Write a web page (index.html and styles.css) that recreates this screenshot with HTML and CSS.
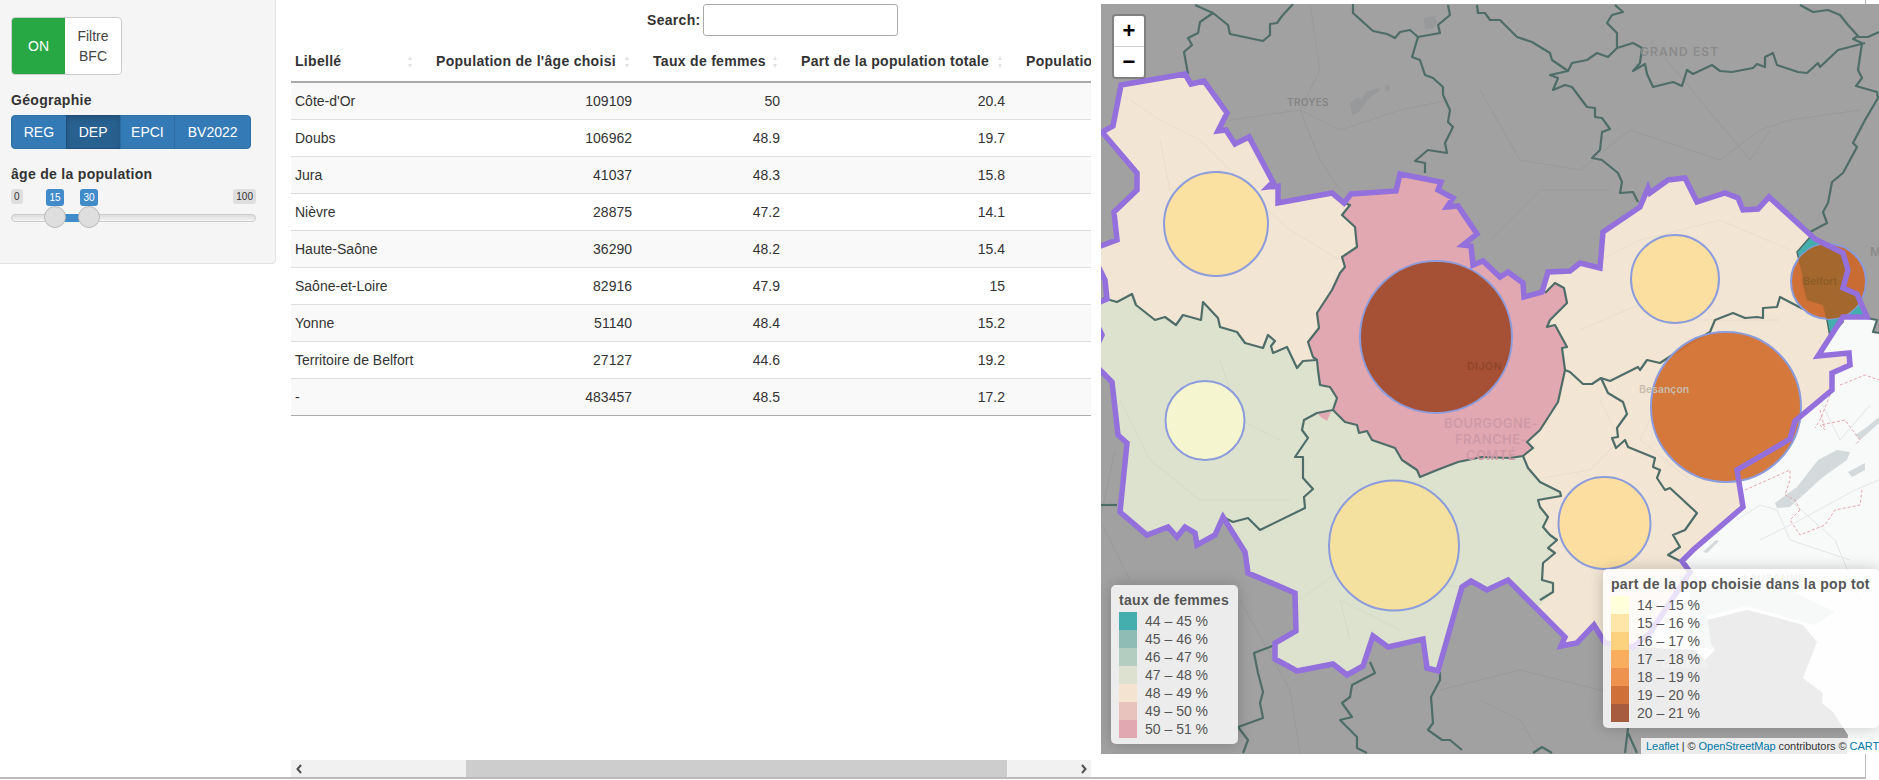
FILE: index.html
```html
<!DOCTYPE html>
<html lang="fr">
<head>
<meta charset="utf-8">
<title>Population par âge</title>
<link rel="stylesheet" href="styles.css">
</head>
<body>
<div class="page">
  <aside class="well">
    <div class="toggle"><span class="toggle-on">ON</span><span class="toggle-label">Filtre BFC</span></div>
    <div class="field-title geo-title">Géographie</div>
    <div class="btn-group">
      <span class="btn btn-reg">REG</span><span class="btn btn-dep">DEP</span><span class="btn btn-epci">EPCI</span><span class="btn btn-bv">BV2022</span>
    </div>
    <div class="field-title age-title">âge de la population</div>
    <div class="slider">
      <span class="tick tick-min">0</span>
      <span class="tick tick-max">100</span>
      <span class="tick tick-from">15</span>
      <span class="tick tick-to">30</span>
      <span class="slider-line"></span>
      <span class="slider-bar"></span>
      <span class="handle handle-from"></span>
      <span class="handle handle-to"></span>
    </div>
  </aside>

  <section class="data">
    <div class="search"><label class="search-label" for="q">Search:</label><input id="q" class="search-input" type="text"></div>
    <div class="table-clip">
      <table class="table">
        <colgroup><col class="c1"><col class="c2"><col class="c3"><col class="c4"><col class="c5"></colgroup>
        <thead>
          <tr>
            <th>Libellé<span class="sort"></span></th>
            <th>Population de l'âge choisi<span class="sort"></span></th>
            <th>Taux de femmes<span class="sort"></span></th>
            <th>Part de la population totale<span class="sort"></span></th>
            <th>Population totale<span class="sort"></span></th>
          </tr>
        </thead>
        <tbody>
          <tr><td>Côte-d'Or</td><td class="num">109109</td><td class="num">50</td><td class="num">20.4</td><td></td></tr>
          <tr><td>Doubs</td><td class="num">106962</td><td class="num">48.9</td><td class="num">19.7</td><td></td></tr>
          <tr><td>Jura</td><td class="num">41037</td><td class="num">48.3</td><td class="num">15.8</td><td></td></tr>
          <tr><td>Nièvre</td><td class="num">28875</td><td class="num">47.2</td><td class="num">14.1</td><td></td></tr>
          <tr><td>Haute-Saône</td><td class="num">36290</td><td class="num">48.2</td><td class="num">15.4</td><td></td></tr>
          <tr><td>Saône-et-Loire</td><td class="num">82916</td><td class="num">47.9</td><td class="num">15</td><td></td></tr>
          <tr><td>Yonne</td><td class="num">51140</td><td class="num">48.4</td><td class="num">15.2</td><td></td></tr>
          <tr><td>Territoire de Belfort</td><td class="num">27127</td><td class="num">44.6</td><td class="num">19.2</td><td></td></tr>
          <tr><td>-</td><td class="num">483457</td><td class="num">48.5</td><td class="num">17.2</td><td></td></tr>
        </tbody>
      </table>
    </div>
    <div class="scrollbar">
      <span class="scroll-btn"><svg class="chev" viewBox="0 0 8 10"><path d="M6 1 L2.5 5 L6 9" /></svg></span>
      <span class="scroll-gap-a"></span>
      <span class="scroll-thumb"></span>
      <span class="scroll-gap-b"></span>
      <span class="scroll-btn"><svg class="chev" viewBox="0 0 8 10"><path d="M2 1 L5.5 5 L2 9" /></svg></span>
    </div>
  </section>

  <section class="map">
    <svg class="map-svg" viewBox="1101 4 778 750" xmlns="http://www.w3.org/2000/svg">
      <defs>
        <polygon id="bfc-shape" points="1102,132 1113,126 1121,85 1185,74 1191,84 1204,81 1227,113 1218,131 1226,130 1235,144 1249,137 1273,182 1268,187 1278,186 1278,203 1332,193 1344,203 1351,194 1396,191 1400,174 1441,182 1438,190 1453,198 1447,207 1458,206 1477,234 1463,245 1471,246 1473,265 1483,261 1500,277 1508,272 1523,283 1524,297 1542,292 1548,272 1570,271 1580,263 1600,268 1603,232 1640,207 1648,188 1650,193 1668,180 1685,178 1697,202 1725,193 1738,198 1743,210 1758,209 1769,197 1815,239 1843,253 1848,270 1843,288 1857,294 1867,317 1843,317 1818,356 1849,353 1850,365 1832,373 1832,390 1795,421 1790,439 1737,470 1743,507 1693,550 1682,561 1690,572 1650,633 1633,647 1605,643 1594,625 1577,643 1561,646 1565,637 1508,580 1487,590 1471,581 1462,587 1438,671 1427,668 1423,639 1388,647 1373,636 1363,666 1347,675 1333,664 1297,671 1275,659 1275,643 1296,631 1295,593 1248,573 1245,552 1223,517 1215,535 1197,545 1195,533 1185,527 1177,537 1168,527 1147,535 1120,512 1127,443 1118,435 1112,382 1090,360 1102,335 1090,310 1100,302 1107,299 1105,280 1090,250 1117,240 1114,212 1137,190 1137,173"/>
        <polygon id="belfort-shape" points="1810,237 1797,252 1803,277 1802,280 1807,300 1823,305 1827,320 1830,337 1843,322 1843,317 1867,317 1857,294 1843,288 1848,270 1843,253 1815,239"/>
        <clipPath id="bfc-clip"><use href="#bfc-shape"/></clipPath>
        <clipPath id="belfort-circle"><circle cx="1828.5" cy="281.5" r="37.5"/></clipPath>
      </defs>

      <rect class="land" x="1101" y="4" width="778" height="750"/>
      <polygon class="swiss" points="1879,333 1873,332 1877,320 1867,317 1843,317 1818,356 1849,353 1850,365 1832,373 1832,390 1795,421 1790,439 1737,470 1743,507 1693,550 1682,561 1690,572 1650,633 1633,647 1695,650 1705,660 1715,650 1707,640 1707,620 1747,610 1767,615 1803,625 1817,642 1803,678 1823,693 1822,703 1833,712 1848,735 1847,754 1879,754"/>

      <g class="lake">
        <polygon points="1818,460 1837,450 1850,452 1847,460 1823,477 1790,507 1777,508 1775,503 1797,487"/>
        <polygon points="1848,472 1865,463 1865,470 1852,477"/>
        <polygon points="1855,435 1867,427 1879,417 1879,423 1868,433 1860,440"/>
        <polygon points="1703,552 1716,540 1719,541 1707,553"/>
        <polygon points="1690,592 1720,580 1790,590 1835,612 1815,625 1747,606 1707,616 1712,650 1698,646 1690,622"/>
      </g>
      <g class="swiss-road">
        <polyline points="1737,520 1760,505 1777,510 1790,540 1850,560"/>
        <polyline points="1760,540 1800,520 1855,490 1879,480"/>
        <polyline points="1820,400 1840,440 1870,405"/>
        <polyline points="1790,500 1835,540 1860,600"/>
      </g>
      <g class="swiss-dash">
        <polyline points="1745,490 1790,470 1790,480 1785,495 1795,500 1800,510"/>
        <polyline points="1820,410 1825,430 1820,425 1845,420 1860,440 1855,445"/>
        <polyline points="1800,510 1790,520 1800,535 1825,525 1835,510 1860,505 1862,490"/>
        <polyline points="1840,385 1865,375 1879,380"/>
        <polyline points="1830,395 1820,420 1815,428"/>
      </g>
      <g class="land-road">
        <polyline points="1310,4 1320,70 1300,110 1320,160 1340,190"/>
        <polyline points="1230,120 1300,110 1340,130 1400,110 1450,100"/>
        <polyline points="1480,90 1520,160 1580,170 1630,130 1660,140 1720,160 1760,130 1790,120 1860,110"/>
        <polyline points="1490,240 1540,190 1610,190"/>
        <polyline points="1240,600 1290,690 1300,754"/>
        <polyline points="1440,690 1520,670 1600,690 1660,700"/>
        <polyline points="1480,700 1520,720 1540,754"/>
        <polyline points="1115,450 1100,520 1130,580"/>
        <polyline points="1650,40 1700,100 1750,160 1770,130"/>
      </g>
      <g class="land-lake">
        <polygon points="1350,103 1356,98 1362,99 1366,92 1378,88 1381,90 1370,97 1358,113 1352,115"/>
        <polygon points="1385,86 1389,85 1390,90 1386,91"/>
        <polygon points="1424,18 1434,16 1438,22 1432,29 1425,29"/>
      </g>

      <g clip-path="url(#bfc-clip)">
        <rect class="r-peach" x="1080" y="60" width="799" height="650"/>
        <g class="region-road">
          <polyline points="1130,100 1160,120 1200,140 1240,180 1260,220"/>
          <polyline points="1160,140 1170,190 1220,170 1290,230 1340,260"/>
          <polyline points="1600,260 1640,240 1720,220 1790,250"/>
          <polyline points="1580,330 1650,300 1700,320 1780,320"/>
          <polyline points="1600,400 1620,440 1590,470 1530,480"/>
          <polyline points="1690,480 1640,440 1660,400"/>
        </g>
        <polygon class="r-green" points="1080,298 1103,298 1117,302 1132,294 1136,305 1155,320 1165,317 1176,325 1183,315 1201,320 1203,302 1218,318 1220,327 1237,332 1245,343 1263,348 1268,335 1275,341 1271,346 1273,353 1287,347 1297,368 1303,361 1317,360 1318,370 1320,385 1330,387 1337,398 1333,410 1345,422 1357,425 1359,433 1367,431 1372,440 1395,448 1402,460 1417,470 1420,477 1437,470 1458,462 1482,457 1510,458 1523,456 1528,468 1540,482 1560,492 1561,496 1538,500 1540,507 1548,517 1543,527 1550,535 1557,540 1548,548 1555,553 1543,563 1542,580 1553,583 1553,592 1535,610 1500,700 1080,700"/>
        <g class="green-road">
          <polyline points="1120,400 1150,460 1200,500 1290,500"/>
          <polyline points="1220,360 1240,420 1280,440"/>
          <polyline points="1300,600 1340,570 1480,590"/>
          <polyline points="1350,640 1340,600 1400,630"/>
        </g>
        <polygon class="r-pink" points="1340,170 1344,203 1350,205 1342,215 1355,227 1357,247 1342,257 1345,267 1340,273 1332,290 1317,313 1319,328 1308,342 1313,357 1317,360 1318,370 1320,385 1330,387 1337,398 1333,410 1345,422 1357,425 1359,433 1367,431 1372,440 1395,448 1402,460 1417,470 1420,477 1437,470 1458,462 1482,457 1510,458 1523,456 1533,448 1527,442 1540,430 1558,402 1565,370 1562,348 1567,347 1555,325 1547,327 1550,320 1567,303 1564,288 1555,283 1545,293 1540,260 1500,170"/>
        <polygon class="r-pink" points="1317,413 1331,412 1327,421 1322,418"/>
        <use href="#belfort-shape" class="r-teal"/>
      </g>

      <g class="dept">
        <polyline points="1195,5 1213,13 1200,22 1198,33 1188,38 1192,45 1184,52 1188,74"/>
        <polyline points="1213,13 1228,25 1230,34 1263,41 1270,35 1270,24 1277,23 1282,16 1293,4"/>
        <polyline points="1353,4 1353,13 1373,31 1387,34 1395,38 1400,32 1410,30 1418,37 1440,33 1438,25 1450,15 1448,5"/>
        <polyline points="1418,37 1412,57 1420,60 1425,75 1433,78 1443,87 1443,95 1450,110 1448,122 1453,127 1445,143 1447,153 1428,150 1415,161 1425,163 1425,173"/>
        <polyline points="1477,5 1478,13 1485,13 1490,20 1500,20 1517,37 1532,42 1550,53 1552,60 1568,71 1572,63 1587,60 1597,53 1608,57 1617,48 1633,43 1642,48 1640,63 1633,71 1645,64 1647,74 1653,87 1673,82 1682,86 1687,70 1693,74 1712,65 1720,71 1732,72 1753,68 1757,64 1765,67 1765,57 1773,53 1777,65 1798,72 1807,73 1818,63 1820,67 1838,50 1865,43"/>
        <polyline points="1617,48 1617,33 1607,23 1612,15 1623,12 1615,5"/>
        <polyline points="1862,43 1853,39 1858,36 1848,25 1840,15 1828,10 1813,12 1800,5"/>
        <polyline points="1858,37 1868,37 1879,32"/>
        <polyline points="1862,43 1858,70 1862,78 1856,86 1877,92 1878,98 1865,120 1853,143 1857,147 1843,173 1832,182 1828,203 1823,212 1827,223 1810,232"/>
        <polyline points="1568,71 1550,75 1558,78 1553,90 1565,85 1572,87 1587,107 1595,108 1595,117 1602,118 1610,129 1602,132 1600,150 1592,158 1602,160 1618,173 1622,182 1620,193 1633,192 1638,202"/>
        <polyline points="1275,645 1254,653 1258,673 1263,692 1260,703 1263,718 1238,727 1248,740 1243,753"/>
        <polyline points="1370,662 1375,673 1352,685 1350,697 1342,703 1352,717 1340,720 1357,737 1357,748 1367,753"/>
        <polyline points="1440,672 1440,680 1431,697 1433,723 1428,730 1442,740 1450,740 1462,750"/>
        <polyline points="1101,505 1117,505"/>
        <polyline points="1628,728 1625,753"/>
        <polyline points="1628,733 1637,753"/>
        <polyline points="1533,753 1542,747 1552,753"/>
        <polyline points="1867,318 1877,320 1873,332 1879,333"/>
      </g>
      <g class="dept inner">
        <polyline points="1103,298 1117,302 1132,294 1136,305 1155,320 1165,317 1176,325 1183,315 1201,320 1203,302 1218,318 1220,327 1237,332 1245,343 1263,348 1268,335 1275,341 1271,346 1273,353 1287,347 1297,368 1303,361 1317,360"/>
        <polyline points="1344,203 1350,205 1342,215 1355,227 1357,247 1342,257 1345,267 1340,273 1332,290 1317,313 1319,328 1308,342 1313,357 1317,360 1318,370 1320,385 1330,387 1337,398 1333,410 1345,422 1357,425 1359,433 1367,431 1372,440 1395,448 1402,460 1417,470 1420,477 1437,470 1458,462 1482,457 1510,458 1523,456 1533,448 1527,442 1540,430 1558,402 1565,370 1562,348 1567,347 1555,325 1547,327 1550,320 1567,303 1564,288 1555,283 1545,293"/>
        <polyline points="1333,410 1317,413 1304,420 1302,430 1308,438 1295,457 1303,457 1303,478 1313,489 1304,497 1305,508 1260,530 1248,518 1233,522 1223,517"/>
        <polyline points="1565,370 1570,372 1583,384 1592,384 1601,378 1610,381 1638,367 1640,370 1647,360 1660,363 1680,350 1690,343 1700,338 1710,332 1715,320 1733,313 1745,318 1757,317 1763,318 1763,308 1777,307 1780,297 1803,309"/>
        <polyline points="1601,378 1608,393 1623,402 1627,414 1617,428 1618,437 1612,438 1616,448 1625,440 1628,447 1655,458 1653,467 1660,470 1657,478 1665,490 1670,488 1697,513 1685,530 1673,535 1680,547 1668,555 1680,561"/>
        <polyline points="1523,456 1528,468 1540,482 1560,492 1561,496 1538,500 1540,507 1548,517 1543,527 1550,535 1557,540 1548,548 1555,553 1543,563 1542,580 1553,583 1553,592 1540,600"/>
        <use href="#belfort-shape" class="dept-fill"/>
      </g>

      <g class="bubbles">
        <circle class="b-yonne" cx="1216" cy="224" r="52"/>
        <circle class="b-cote" cx="1436" cy="337" r="76"/>
        <circle class="b-hs" cx="1675" cy="279" r="44"/>
        <circle class="b-belfort" cx="1828.5" cy="281.5" r="37.5"/>
        <circle class="b-doubs" cx="1726" cy="407" r="75"/>
        <circle class="b-nievre" cx="1205" cy="420.5" r="39.5"/>
        <circle class="b-sl" cx="1394" cy="545.5" r="65"/>
        <circle class="b-jura" cx="1604.5" cy="523" r="46"/>
      </g>
      <g clip-path="url(#belfort-circle)">
        <use href="#belfort-shape" class="belfort-over"/>
      </g>

      <g class="place">
        <text class="p-troyes" x="1287" y="106">TROYES</text>
        <text class="p-grand" x="1640" y="56">GRAND EST</text>
        <text class="p-dijon" x="1467" y="370">DIJON</text>
        <text class="p-region" x="1491" y="428">BOURGOGNE-</text>
        <text class="p-region" x="1491" y="444">FRANCHE-</text>
        <text class="p-region" x="1491" y="460">COMTÉ</text>
        <text class="p-bes" x="1639" y="393">Besançon</text>
        <text class="p-bel" x="1803" y="285">Belfort</text>
        <text class="p-grand" x="1870" y="256">M</text>
        <text class="p-swiss" x="1743" y="582">LAUSANNE</text>
        <text class="p-swiss" x="1662" y="668">GENEVA</text>
      </g>

      <use href="#bfc-shape" class="bfc-line"/>
    </svg>

    <div class="zoom">
      <a class="zoom-btn zoom-in">+</a>
      <a class="zoom-btn zoom-out">−</a>
    </div>

    <div class="legend legend-left">
      <div class="legend-title">taux de femmes</div>
      <div class="legend-row"><i class="sw t1"></i><span>44 – 45 %</span></div>
      <div class="legend-row"><i class="sw t2"></i><span>45 – 46 %</span></div>
      <div class="legend-row"><i class="sw t3"></i><span>46 – 47 %</span></div>
      <div class="legend-row"><i class="sw t4"></i><span>47 – 48 %</span></div>
      <div class="legend-row"><i class="sw t5"></i><span>48 – 49 %</span></div>
      <div class="legend-row"><i class="sw t6"></i><span>49 – 50 %</span></div>
      <div class="legend-row"><i class="sw t7"></i><span>50 – 51 %</span></div>
    </div>

    <div class="legend legend-right">
      <div class="legend-title">part de la pop choisie dans la pop tot</div>
      <div class="legend-row"><i class="sw p1"></i><span>14 – 15 %</span></div>
      <div class="legend-row"><i class="sw p2"></i><span>15 – 16 %</span></div>
      <div class="legend-row"><i class="sw p3"></i><span>16 – 17 %</span></div>
      <div class="legend-row"><i class="sw p4"></i><span>17 – 18 %</span></div>
      <div class="legend-row"><i class="sw p5"></i><span>18 – 19 %</span></div>
      <div class="legend-row"><i class="sw p6"></i><span>19 – 20 %</span></div>
      <div class="legend-row"><i class="sw p7"></i><span>20 – 21 %</span></div>
    </div>

    <div class="attribution"><a>Leaflet</a> | © <a>OpenStreetMap</a> contributors © <a>CARTO</a></div>
  </section>
</div>
</body>
</html>
```

FILE: styles.css
```css
* { box-sizing: border-box; }
html, body { margin: 0; padding: 0; height: 780px; overflow: hidden; background: #fff; }
body { font: 14px/20px "Liberation Sans", Arial, sans-serif; color: #333; }

.page {
  display: flex;
  align-items: flex-start;
  width: 1866px;
  height: 779px;
  border-right: 1px solid #bbb;
  border-bottom: 2px solid #bbb;
}

/* sidebar */
.well {
  flex: none;
  width: 276px;
  height: 264px;
  padding: 17px 11px 0;
  background: #f5f5f5;
  border: 1px solid #e3e3e3;
  border-width: 0 1px 1px 0;
  border-bottom-right-radius: 4px;
}
.toggle {
  display: flex;
  width: 111px;
  height: 58px;
  background: #fff;
  border: 1px solid #ccc;
  border-radius: 4px;
  overflow: hidden;
}
.toggle-on {
  width: 53px;
  display: flex;
  align-items: center;
  justify-content: center;
  background: #28a745;
  color: #fff;
}
.toggle-label {
  flex: 1;
  display: flex;
  align-items: center;
  text-align: center;
  padding: 0 10px;
  color: #444;
}
.field-title { font-weight: 700; color: #333; letter-spacing: .3px; }
.geo-title { margin-top: 15px; }
.btn-group { display: flex; width: 240px; height: 34px; margin-top: 5px; }
.btn {
  display: flex;
  align-items: center;
  justify-content: center;
  background: #337ab7;
  color: #fff;
  border: 1px solid #2e6da4;
  margin-left: -1px;
}
.btn-reg { width: 56px; margin-left: 0; border-radius: 4px 0 0 4px; }
.btn-dep { width: 55px; background: #286090; border-color: #204d74; box-shadow: inset 0 3px 5px rgba(0,0,0,.125); }
.btn-epci { width: 56px; }
.btn-bv { width: 77px; border-radius: 0 4px 4px 0; }
.age-title { margin-top: 15px; }

.slider { position: relative; width: 245px; height: 50px; margin-top: 5px; }
.tick {
  position: absolute;
  top: 0;
  height: 15px;
  padding: 0 3px;
  font-size: 10px;
  line-height: 15px;
  background: #dedede;
  color: #333;
  border-radius: 3px;
}
.tick-min { left: 0; }
.tick-max { right: 0; }
.tick-from, .tick-to { height: 17px; line-height: 17px; background: #428bca; color: #fff; width: 18px; text-align: center; padding: 0; }
.tick-from { left: 35px; }
.tick-to { left: 69px; }
.slider-line {
  position: absolute;
  left: 0;
  right: 0;
  top: 25px;
  height: 8px;
  background: linear-gradient(#ddd, #f4f4f4);
  border: 1px solid #ccc;
  border-radius: 8px;
}
.slider-bar { position: absolute; left: 44px; width: 34px; top: 25px; height: 8px; background: #428bca; }
.handle {
  position: absolute;
  top: 17px;
  width: 22px;
  height: 22px;
  background: #dedede;
  border: 1px solid #b9b9b9;
  border-radius: 50%;
}
.handle-from { left: 33px; }
.handle-to { left: 67px; }

/* table */
.data {
  flex: none;
  width: 800px;
  height: 777px;
  margin-left: 15px;
  display: flex;
  flex-direction: column;
}
.search { display: flex; align-items: center; height: 40px; padding: 4px 0 4px 356px; }
.search-label { flex: none; width: 56px; font-weight: 700; letter-spacing: .3px; }
.search-input { width: 195px; height: 32px; border: 1px solid #aaa; border-radius: 3px; background: #fff; padding: 0 6px; }
.table-clip { flex: 1; overflow: hidden; }
.table { border-collapse: separate; border-spacing: 0; table-layout: fixed; width: 1031px; }
.c1 { width: 141px; }
.c2 { width: 217px; }
.c3 { width: 148px; }
.c4 { width: 225px; }
.c5 { width: 300px; }
.table th {
  position: relative;
  height: 43px;
  padding: 0 17px 0 4px;
  text-align: left;
  font-weight: 700;
  letter-spacing: .3px;
  white-space: nowrap;
  border-bottom: 2px solid #aaa;
}
.table td {
  height: 37px;
  padding: 0 17px 0 4px;
  border-bottom: 1px solid #ddd;
  white-space: nowrap;
}
.table tbody tr:nth-child(odd) td { background: #f9f9f9; }
.table tbody tr:last-child td { border-bottom-color: #aaa; }
.table td.num { text-align: right; }
.sort {
  position: absolute;
  right: 19px;
  top: 16px;
  width: 5px;
  height: 12px;
}
.sort::before, .sort::after {
  content: "";
  position: absolute;
  left: 0;
  border-left: 2.5px solid transparent;
  border-right: 2.5px solid transparent;
}
.sort::before { top: 0; border-bottom: 4px solid #e2e2e2; }
.sort::after { bottom: 0; border-top: 4px solid #e2e2e2; }

.scrollbar { flex: none; display: flex; height: 17px; background: #f1f1f1; }
.scroll-btn { flex: none; width: 15px; display: flex; align-items: center; justify-content: center; }
.scroll-gap-a { flex: none; width: 160px; }
.scroll-thumb { flex: none; width: 541px; background: #cdcdcd; }
.scroll-gap-b { flex: 1; }
.chev { width: 8px; height: 10px; fill: none; stroke: #505050; stroke-width: 2; }

/* map */
.map {
  position: relative;
  flex: none;
  width: 778px;
  height: 750px;
  margin: 4px 0 0 10px;
  overflow: hidden;
}
.map-svg { display: block; width: 778px; height: 750px; }
.land { fill: #a1a1a1; }
.swiss { fill: #f8f9f9; }
.lake polygon { fill: #d4dadc; }
.swiss-road polyline { fill: none; stroke: #e4e6e8; stroke-width: 1; }
.swiss-dash polyline { fill: none; stroke: #e3a9ae; stroke-width: 1; stroke-dasharray: 3 2; }
.land-road polyline { fill: none; stroke: #9a9a9a; stroke-width: 1; }
.land-lake polygon { fill: #98999b; }
.r-peach { fill: #f2e5d4; }
.region-road polyline { fill: none; stroke: #eaddcb; stroke-width: 1; }
.r-green { fill: #dde2cf; }
.green-road polyline { fill: none; stroke: #d4dac6; stroke-width: 1; }
.r-pink { fill: #e2a8b1; }
.r-teal { fill: #44aeae; }
.dept polyline { fill: none; stroke: #4f6d68; stroke-width: 2.2; stroke-linejoin: round; }
.dept-fill { fill: none; stroke: #4f6d68; stroke-width: 1.5; }
.bubbles circle { stroke: #8c9bdc; stroke-width: 2; fill-opacity: .93; }
.b-yonne { fill: #fbe09d; }
.b-cote { fill: #a14a2b; }
.b-hs { fill: #fcdf9c; }
.b-belfort { fill: #cc682b; }
.b-doubs { fill: #d2702f; }
.b-nievre { fill: #f6f8d0; }
.b-sl { fill: #f6e19b; }
.b-jura { fill: #fddf9c; }
.belfort-over { fill: #a4682f; }
.place text { font-family: "Inter", "Open Sans", sans-serif; font-weight: 600; }
.p-troyes { font-size: 10px; letter-spacing: .3px; fill: #858585; }
.p-grand { font-size: 12px; letter-spacing: 1.1px; fill: #8a8a8a; }
.p-dijon { font-size: 10.5px; letter-spacing: .5px; fill: #8f452b; }
.p-region { font-size: 13px; letter-spacing: .4px; text-anchor: middle; fill: #cf9aa7; }
.p-bes { font-size: 10.5px; fill: #c9bcae; }
.p-bel { font-size: 10.5px; fill: #8d5a26; }
.p-swiss { font-size: 10.5px; letter-spacing: .5px; fill: #c0c0c0; }
.bfc-line { fill: none; stroke: #9370db; stroke-width: 5.5; stroke-linejoin: miter; stroke-miterlimit: 3; }

.zoom {
  position: absolute;
  left: 11px;
  top: 10px;
  width: 34px;
  border: 2px solid rgba(0,0,0,.2);
  border-radius: 4px;
  background-clip: padding-box;
}
.zoom-btn {
  display: block;
  height: 30px;
  background: #fff;
  color: #000;
  font: 700 22px/30px "Liberation Sans", sans-serif;
  text-align: center;
}
.zoom-in { border-bottom: 1px solid #ccc; height: 31px; border-radius: 2px 2px 0 0; }
.zoom-out { border-radius: 0 0 2px 2px; }

.legend {
  position: absolute;
  padding: 6px 8px;
  background: rgba(255,255,255,.8);
  border-radius: 5px;
  box-shadow: 0 0 15px rgba(0,0,0,.2);
  color: #555;
  font-size: 14px;
  line-height: 18px;
  white-space: nowrap;
}
.legend-left { left: 10px; top: 581px; width: 127px; height: 159px; }
.legend-right { left: 502px; top: 565px; width: 276px; height: 159px; }
.legend-title { font-weight: 700; letter-spacing: .3px; height: 15px; line-height: 18px; margin-bottom: 6px; }
.legend-row { display: flex; height: 18px; }
.sw { flex: none; width: 18px; height: 18px; margin-right: 8px; }
.t1 { background: #44aeae; }
.t2 { background: #90bcb6; }
.t3 { background: #b4cdc1; }
.t4 { background: #dde1cf; }
.t5 { background: #f3e3d0; }
.t6 { background: #e8c3bd; }
.t7 { background: #e1a8b1; }
.p1 { background: #ffffd9; }
.p2 { background: #fee6a8; }
.p3 { background: #fdd27e; }
.p4 { background: #f9ae5f; }
.p5 { background: #ee9250; }
.p6 { background: #cf7039; }
.p7 { background: #a65c3e; }

.attribution {
  position: absolute;
  left: 540px;
  top: 734px;
  height: 16px;
  width: 260px;
  padding: 0 5px;
  background: rgba(255,255,255,.8);
  color: #333;
  font-size: 11px;
  letter-spacing: -.05px;
  line-height: 16px;
  white-space: nowrap;
}
.attribution a { color: #0078a8; }
```
